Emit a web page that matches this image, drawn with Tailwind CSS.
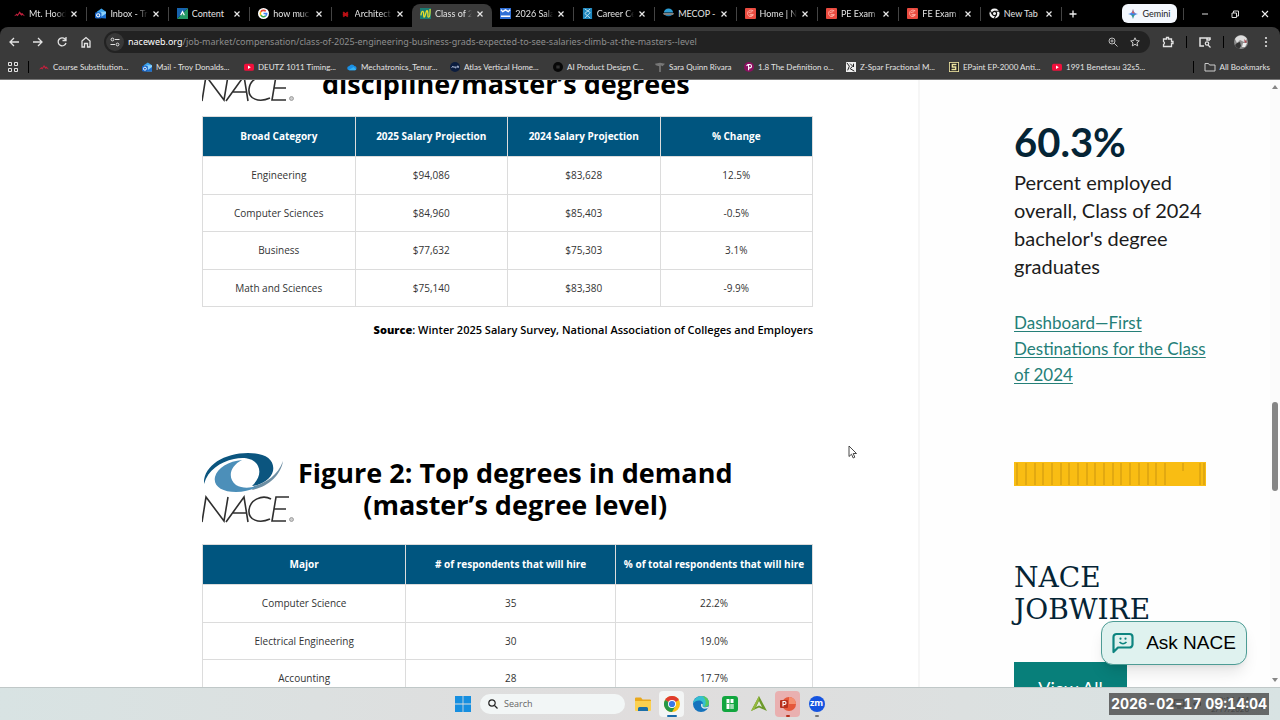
<!DOCTYPE html>
<html lang="en">
<head>
    <meta charset="UTF-8">
    <meta name="viewport" content="width=device-width, initial-scale=1.0">
    <title>Class of 2025 Salaries</title>
    <script src="https://cdn.jsdelivr.net/npm/@tailwindcss/browser@4"></script>
</head>
<body class="h-screen overflow-hidden flex flex-col bg-black font-['Open_Sans',sans-serif] text-black">
    <!-- Shared symbols -->
    <svg class="hidden">
        <symbol id="i-mhcc" viewBox="0 0 12 12"><path d="M0 9 L3 6 L4 7 L6 3.500 L8 6 L9 5.500 L12 9 L9 7.500 L8 8.500 L6 6 L4 9 L3 8Z" fill="#c3203d"/></symbol>
        <symbol id="i-outlook" viewBox="0 0 12 12"><path d="M2 4 L7 .5 L12 4 V11 H3Z" fill="#3ba3ee"/><path d="M5 4h7v7H6z" fill="#8cd0fb"/><path d="M5 11 L12 6 V11.500Z" fill="#1b6fd0"/><rect y="4.500" width="7" height="7" rx="1.500" fill="#1664c7"/><circle cx="3.500" cy="8" r="1.800" fill="none" stroke="#fff" stroke-width="1.100"/></symbol>
        <symbol id="i-content" viewBox="0 0 12 12"><path d="M0 0h12L0 12z" fill="#1763ae"/><path d="M12 0v12H0z" fill="#259a66"/><path d="M4 8 L6 4 L8 8" fill="none" stroke="#fff" stroke-width="1.300"/></symbol>
        <symbol id="i-google" viewBox="0 0 12 12"><circle cx="6" cy="6" r="6" fill="#fff"/><g fill="none" stroke-width="1.700"><path d="M8.500 3.600A3.500 3.500 0 0 0 3 4.300" stroke="#ea4335"/><path d="M3 4.300A3.500 3.500 0 0 0 3 7.800" stroke="#fbbc05"/><path d="M3 7.800A3.500 3.500 0 0 0 8.300 8.600" stroke="#34a853"/><path d="M8.300 8.600A3.500 3.500 0 0 0 9.500 6H6" stroke="#4285f4"/></g></symbol>
        <symbol id="i-arch" viewBox="0 0 12 12"><path d="M3.500 4.500l5 5M8.500 4.500l-5 5M3 7h6" stroke="#b90f14" stroke-width="1.800"/></symbol>
        <symbol id="i-nace" viewBox="0 0 12 12"><rect width="12" height="12" fill="#1b7b72"/><path d="M1 8c1-6 3-5 3-1s1 4 2 0 2-6 2.500-2-.5 5 1 5S11 6 11 1" fill="none" stroke="#e9df2c" stroke-width="1.400"/></symbol>
        <symbol id="i-sal" viewBox="0 0 12 12"><rect width="12" height="12" fill="#2f6fd6"/><path d="M1 2l2 2 3-2 3 2 2-2M1 9h10" stroke="#fff" stroke-width="1.500" fill="none"/></symbol>
        <symbol id="i-career" viewBox="0 0 12 12"><rect x="1" width="10" height="12" fill="#1e86bd"/><path d="M3 1l6 4-6 6M9 1l-6 5 6 5" stroke="#bfe6f6" fill="none"/></symbol>
        <symbol id="i-mecop" viewBox="0 0 12 12"><path d="M1 5a5 4.500 0 0 1 10 0z" fill="#2c9ed6"/><path d="M0 6h12l-1 1H1z" fill="#fff"/><path d="M2 7.500h8a5 4 0 0 1-8 0z" fill="#1b79ad"/></symbol>
        <symbol id="i-ncees" viewBox="0 0 12 12"><rect width="12" height="12" rx="1" fill="#ea4b40"/><path d="M9 3C5 1 2 4 3 7s5 3 6 0H5M4 5l4-1M5 9l4-1" stroke="#ffb3a8" fill="none"/></symbol>
        <symbol id="i-newtab" viewBox="0 0 12 12"><circle cx="6" cy="6" r="5.500" fill="#f4f4f4"/><circle cx="6" cy="6" r="2.300" fill="#f4f4f4" stroke="#111" stroke-width="1.300"/><path d="M6 3.500h5.500M3.900 7.300L1.200 2.800M8 7.300L5.300 12" stroke="#111" stroke-width="1.200"/></symbol>
        <symbol id="i-youtube" viewBox="0 0 12 12"><rect y="2" width="12" height="8.500" rx="2.200" fill="#f0103c"/><path d="M4.800 4.300v4l3.400-2z" fill="#fff"/></symbol>
        <symbol id="i-cloud" viewBox="0 0 12 12"><path d="M3 10a2.600 2.600 0 0 1-.3-5.200A3.600 3.600 0 0 1 9 4.700 2.700 2.700 0 0 1 9.500 10z" fill="#1a8fe3"/><path d="M2 9.500L8 6l3 3-1 1H3z" fill="#35b1f3"/></symbol>
        <symbol id="i-atlas" viewBox="0 0 12 12"><circle cx="6" cy="6" r="6" fill="#0c1d3e"/><path d="M2 7l1.500-2L5 7M6 5v2h1.500M8.500 7V5H10v2" stroke="#cfdcf5" fill="none"/></symbol>
        <symbol id="i-ai" viewBox="0 0 12 12"><circle cx="6" cy="6" r="6" fill="#080808"/><path d="M4 5h4M4 7h4" stroke="#555"/></symbol>
        <symbol id="i-sara" viewBox="0 0 12 12"><path d="M0 2l6-1 6 1-3 3-2-1v8H5V5L1 4z" fill="#777"/></symbol>
        <symbol id="i-pearson" viewBox="0 0 12 12"><circle cx="6" cy="6" r="6" fill="#8a1060"/><path d="M5.500 10V3H7a2 2 0 0 1 0 4H5.500M3 4.500l2-1.500" stroke="#fff" stroke-width="1.300" fill="none"/></symbol>
        <symbol id="i-zspar" viewBox="0 0 12 12"><rect width="12" height="12" fill="#eee"/><path d="M1 1l3 4-2 5M5 2l3 3-3 3 5 3M9 2v4" stroke="#222" stroke-width="1.200" fill="none"/></symbol>
        <symbol id="i-epaint" viewBox="0 0 12 12"><rect x=".5" y=".5" width="11" height="11" fill="#222" stroke="#ece3a0"/><path d="M9 3H4v3h4v3H3" stroke="#ece3a0" stroke-width="1.700" fill="none"/></symbol>
        <symbol id="i-close" viewBox="0 0 8 8"><path d="M1.500 1.500l5 5M6.500 1.500l-5 5" stroke="#e8e8e8" stroke-width="1.200"/></symbol>
        <symbol id="i-logotext" viewBox="0 0 92 28"><g fill="none" stroke="#2f2f2f" stroke-width="1.600"><path d="M0 27L4 2L22 26L26 2"/><path d="M24 27L42 2L46 27M30 18H45"/><path d="M69 4C60-1 48 5 47 15S57 29 68 24"/><path d="M87 2H74L70 26H84M72 14H84"/></g><circle cx="89.500" cy="24.500" r="2" fill="#ccc" stroke="#888" stroke-width=".7"/></symbol>
    </svg>

    <!-- Tab strip -->
    <header class="h-[27px] shrink-0 flex items-center text-[9px] text-[#e3e3e3] font-['Lato',sans-serif]">
        <nav class="flex-1 min-w-0 flex h-full items-center pl-1.5">
            <a href="#" class="flex-1 min-w-0 flex items-center h-3.5 px-2 border-r border-[#444]"><svg class="size-[11px] shrink-0"><use href="#i-mhcc"/></svg><span class="ml-1 flex-1 min-w-0 overflow-hidden whitespace-nowrap mask-r-from-70%">Mt. Hood</span><svg class="size-2 shrink-0 ml-1"><use href="#i-close"/></svg></a>
            <a href="#" class="flex-1 min-w-0 flex items-center h-3.5 px-2 border-r border-[#444]"><svg class="size-[11px] shrink-0"><use href="#i-outlook"/></svg><span class="ml-1 flex-1 min-w-0 overflow-hidden whitespace-nowrap mask-r-from-70%">Inbox - Tr</span><svg class="size-2 shrink-0 ml-1"><use href="#i-close"/></svg></a>
            <a href="#" class="flex-1 min-w-0 flex items-center h-3.5 px-2 border-r border-[#444]"><svg class="size-[11px] shrink-0"><use href="#i-content"/></svg><span class="ml-1 flex-1 min-w-0 overflow-hidden whitespace-nowrap">Content</span><svg class="size-2 shrink-0 ml-1"><use href="#i-close"/></svg></a>
            <a href="#" class="flex-1 min-w-0 flex items-center h-3.5 px-2 border-r border-[#444]"><svg class="size-[11px] shrink-0"><use href="#i-google"/></svg><span class="ml-1 flex-1 min-w-0 overflow-hidden whitespace-nowrap mask-r-from-70%">how muc</span><svg class="size-2 shrink-0 ml-1"><use href="#i-close"/></svg></a>
            <a href="#" class="flex-1 min-w-0 flex items-center h-3.5 px-2"><svg class="size-[11px] shrink-0"><use href="#i-arch"/></svg><span class="ml-1 flex-1 min-w-0 overflow-hidden whitespace-nowrap mask-r-from-70%">Architect</span><svg class="size-2 shrink-0 ml-1"><use href="#i-close"/></svg></a>
            <a href="#" class="flex-1 min-w-0 flex items-center self-end h-[23px] pb-1 px-2 rounded-t-lg bg-[#3a3a3a]"><svg class="size-[11px] shrink-0"><use href="#i-nace"/></svg><span class="ml-1 flex-1 min-w-0 overflow-hidden whitespace-nowrap mask-r-from-80%">Class of 2</span><svg class="size-2 shrink-0 ml-1"><use href="#i-close"/></svg></a>
            <a href="#" class="flex-1 min-w-0 flex items-center h-3.5 px-2 border-r border-[#444]"><svg class="size-[11px] shrink-0"><use href="#i-sal"/></svg><span class="ml-1 flex-1 min-w-0 overflow-hidden whitespace-nowrap mask-r-from-80%">2026 Sala</span><svg class="size-2 shrink-0 ml-1"><use href="#i-close"/></svg></a>
            <a href="#" class="flex-1 min-w-0 flex items-center h-3.5 px-2 border-r border-[#444]"><svg class="size-[11px] shrink-0"><use href="#i-career"/></svg><span class="ml-1 flex-1 min-w-0 overflow-hidden whitespace-nowrap mask-r-from-80%">Career Ce</span><svg class="size-2 shrink-0 ml-1"><use href="#i-close"/></svg></a>
            <a href="#" class="flex-1 min-w-0 flex items-center h-3.5 px-2 border-r border-[#444]"><svg class="size-[11px] shrink-0"><use href="#i-mecop"/></svg><span class="ml-1 flex-1 min-w-0 overflow-hidden whitespace-nowrap">MECOP -</span><svg class="size-2 shrink-0 ml-1"><use href="#i-close"/></svg></a>
            <a href="#" class="flex-1 min-w-0 flex items-center h-3.5 px-2 border-r border-[#444]"><svg class="size-[11px] shrink-0"><use href="#i-ncees"/></svg><span class="ml-1 flex-1 min-w-0 overflow-hidden whitespace-nowrap mask-r-from-80%">Home | N</span><svg class="size-2 shrink-0 ml-1"><use href="#i-close"/></svg></a>
            <a href="#" class="flex-1 min-w-0 flex items-center h-3.5 px-2 border-r border-[#444]"><svg class="size-[11px] shrink-0"><use href="#i-ncees"/></svg><span class="ml-1 flex-1 min-w-0 overflow-hidden whitespace-nowrap mask-r-from-80%">PE Exam |</span><svg class="size-2 shrink-0 ml-1"><use href="#i-close"/></svg></a>
            <a href="#" class="flex-1 min-w-0 flex items-center h-3.5 px-2 border-r border-[#444]"><svg class="size-[11px] shrink-0"><use href="#i-ncees"/></svg><span class="ml-1 flex-1 min-w-0 overflow-hidden whitespace-nowrap mask-r-from-80%">FE Exam |</span><svg class="size-2 shrink-0 ml-1"><use href="#i-close"/></svg></a>
            <a href="#" class="flex-1 min-w-0 flex items-center h-3.5 px-2 border-r border-[#444]"><svg class="size-[11px] shrink-0"><use href="#i-newtab"/></svg><span class="ml-1 flex-1 min-w-0 overflow-hidden whitespace-nowrap">New Tab</span><svg class="size-2 shrink-0 ml-1"><use href="#i-close"/></svg></a>
        </nav>
        <div class="w-[218px] shrink-0 flex items-center">
            <button aria-label="New tab" class="ml-1.5"><svg class="size-2.5" viewBox="0 0 10 10"><path d="M5 1.500v7M1.500 5h7" stroke="#eee" stroke-width="1.300"/></svg></button>
            <button class="ml-11 h-[19px] w-[55px] rounded-md bg-[#f3f7fd] text-[#222] flex items-center justify-center gap-1"><svg class="size-2.5" viewBox="0 0 10 10"><path d="M5 0Q5.500 4.500 10 5H0Q4.500 4.500 5 0Z" fill="#4d7fe6"/><path d="M10 5Q5.500 5.500 5 10Q4.500 5.500 0 5Z" fill="#3b86d8"/><path d="M5 0Q5.300 3.500 7 4.500L4 4Q4.800 2 5 0Z" fill="#e0604f"/><path d="M5 10Q4.800 7.500 4 6l2 0Q5.300 7.500 5 10Z" fill="#3aa865"/></svg>Gemini</button>
            <span class="ml-1.5 h-3 w-px bg-[#444]"></span>
            <button aria-label="Minimize" class="ml-4"><svg class="size-2.5" viewBox="0 0 10 10"><path d="M2 5h6" stroke="#ddd"/></svg></button>
            <button aria-label="Restore" class="ml-5"><svg class="size-2.5" viewBox="0 0 10 10"><path d="M2 4h4.500v4.500H2zM3.500 4V2H8.500v5H6.500" fill="none" stroke="#ddd"/></svg></button>
            <button aria-label="Close" class="ml-5"><svg class="size-2.5" viewBox="0 0 10 10"><path d="M2 2l6 6M8 2l-6 6" stroke="#eee" stroke-width="1.100"/></svg></button>
        </div>
    </header>

    <!-- Toolbar and bookmarks -->
    <div class="h-[53px] shrink-0 bg-[#3a3a3a] rounded-t-lg border-b border-[#777] text-[#e3e3e3] font-['Lato',sans-serif]">
        <div class="h-[30px] flex items-center pl-2">
            <button aria-label="Back" class="mr-3"><svg class="size-3" viewBox="0 0 12 12"><path d="M11 6H2M6 2L2 6l4 4" fill="none" stroke="#e3e3e3" stroke-width="1.300"/></svg></button>
            <button aria-label="Forward" class="mr-3"><svg class="size-3" viewBox="0 0 12 12"><path d="M1 6h9M6 2l4 4-4 4" fill="none" stroke="#e3e3e3" stroke-width="1.300"/></svg></button>
            <button aria-label="Reload" class="mr-3"><svg class="size-3" viewBox="0 0 12 12"><path d="M10 7A4 4 0 1 1 9 3L10 4M10 1v3.500H6.500" fill="none" stroke="#e3e3e3" stroke-width="1.300"/></svg></button>
            <button aria-label="Home" class="mr-3"><svg class="size-3" viewBox="0 0 12 12"><path d="M2 5l4-3.500L10 5v6H7.500V7.500h-3V11H2z" fill="none" stroke="#e3e3e3" stroke-width="1.300"/></svg></button>
            <div class="flex-1 h-[22px] rounded-full bg-[#222] flex items-center pl-0.5 pr-2.5 mr-3">
                <span class="size-[18px] rounded-full bg-[#383838] flex items-center justify-center"><svg class="size-2.5" viewBox="0 0 10 10"><path d="M5 2.500h4.500M.5 7.500H5" stroke="#e3e3e3"/><circle cx="2.500" cy="2.500" r="1.400" fill="none" stroke="#e3e3e3"/><circle cx="7.500" cy="7.500" r="1.400" fill="none" stroke="#e3e3e3"/></svg></span>
                <span class="flex-1 ml-1 whitespace-nowrap text-[9px] font-['Noto_Sans',sans-serif] text-[#8d8d8d]"><span class="text-white">naceweb.org</span>/job-market/compensation/class-of-2025-engineering-business-grads-expected-to-see-salaries-climb-at-the-masters--level</span>
                <button aria-label="Zoom" class="mr-3"><svg class="size-2.5" viewBox="0 0 10 10"><circle cx="4" cy="4" r="3" fill="none" stroke="#bbb"/><path d="M6.200 6.200L9.500 9.500M2.500 4h3M4 2.500v3" stroke="#bbb"/></svg></button>
                <button aria-label="Bookmark"><svg class="size-2.5" viewBox="0 0 10 10"><path d="M5 .8l1.300 2.800 3 .3-2.300 2 .7 3L5 7.300 2.300 8.900l.7-3-2.300-2 3-.3z" fill="none" stroke="#ccc"/></svg></button>
            </div>
            <button aria-label="Extensions"><svg class="size-3" viewBox="0 0 12 12"><path d="M1.500 3H4.500V1.500h2V3H9.500V5.500H11v2H9.500V10.500H1.500V8.500q2-1.500 0-3z" fill="none" stroke="#e3e3e3" stroke-width="1.300"/></svg></button>
            <span class="ml-3 h-3 w-px bg-black"></span>
            <button aria-label="Tab search" class="ml-3"><svg class="size-3" viewBox="0 0 12 12"><path d="M5 10H1V2h10v2M8 2v2h3" fill="none" stroke="#e3e3e3" stroke-width="1.500"/><circle cx="8" cy="7.500" r="1.700" fill="none" stroke="#e3e3e3" stroke-width="1.200"/><path d="M9 9l2.500 2.500" stroke="#e3e3e3" stroke-width="1.200"/></svg></button>
            <span class="ml-3 h-3 w-px bg-black"></span>
            <button aria-label="Profile" class="ml-2.5"><svg class="size-3.5" viewBox="0 0 14 14"><circle cx="7" cy="7" r="7" fill="#8d8d8d"/><path d="M1 4a7 7 0 0 1 12 0l-3 3-4-2-3 3z" fill="#ddd"/><path d="M3 8l3-1 1 4-2 3A7 7 0 0 1 1 10z" fill="#333"/><path d="M9 8h4l-2 4H8z" fill="#eee"/><path d="M10 4l3 3-2 1z" fill="#b14a52"/></svg></button>
            <button aria-label="Menu" class="ml-3 mr-2"><svg class="size-3" viewBox="0 0 12 12" fill="#e3e3e3"><circle cx="6" cy="2" r="1.100"/><circle cx="6" cy="6" r="1.100"/><circle cx="6" cy="10" r="1.100"/></svg></button>
        </div>
        <nav class="h-[19px] flex items-center pl-2 whitespace-nowrap text-[8px]">
            <svg class="size-2.5 mr-2.5" viewBox="0 0 10 10"><path d="M.5.5h3v3h-3zM6.500.5h3v3h-3zM.5 6.500h3v3h-3zM6.500 6.500h3v3h-3z" fill="none" stroke="#e3e3e3"/></svg>
            <span class="h-3 w-px bg-black mr-2.5"></span>
            <a href="#" class="w-[103px] flex items-center gap-1"><svg class="size-2.5 shrink-0"><use href="#i-mhcc"/></svg>Course Substitution...</a>
            <a href="#" class="w-[102px] flex items-center gap-1"><svg class="size-2.5 shrink-0"><use href="#i-outlook"/></svg>Mail - Troy Donalds...</a>
            <a href="#" class="w-[103px] flex items-center gap-1"><svg class="size-2.5 shrink-0"><use href="#i-youtube"/></svg>DEUTZ 1011 Timing...</a>
            <a href="#" class="w-[103px] flex items-center gap-1"><svg class="size-2.5 shrink-0"><use href="#i-cloud"/></svg>Mechatronics_Tenur...</a>
            <a href="#" class="w-[103px] flex items-center gap-1"><svg class="size-2.5 shrink-0"><use href="#i-atlas"/></svg>Atlas Vertical Home...</a>
            <a href="#" class="w-[102px] flex items-center gap-1"><svg class="size-2.5 shrink-0"><use href="#i-ai"/></svg>AI Product Design C...</a>
            <a href="#" class="w-[89px] flex items-center gap-1"><svg class="size-2.5 shrink-0"><use href="#i-sara"/></svg>Sara Quinn Rivara</a>
            <a href="#" class="w-[102px] flex items-center gap-1"><svg class="size-2.5 shrink-0"><use href="#i-pearson"/></svg>1.8 The Definition o...</a>
            <a href="#" class="w-[103px] flex items-center gap-1"><svg class="size-2.5 shrink-0"><use href="#i-zspar"/></svg>Z-Spar Fractional M...</a>
            <a href="#" class="w-[103px] flex items-center gap-1"><svg class="size-2.5 shrink-0"><use href="#i-epaint"/></svg>EPaint EP-2000 Anti...</a>
            <a href="#" class="flex items-center gap-1"><svg class="size-2.5 shrink-0"><use href="#i-youtube"/></svg>1991 Beneteau 32s5...</a>
            <span class="ml-auto h-3 w-px bg-black"></span>
            <a href="#" class="ml-2.5 mr-2.5 flex items-center gap-1"><svg class="size-3" viewBox="0 0 12 12"><path d="M1 2.500h3.500l1 1.500H11v6H1z" fill="none" stroke="#ccc"/></svg>All Bookmarks</a>
        </nav>
    </div>

    <!-- Page -->
    <div class="relative flex-1 min-h-0 overflow-hidden flex bg-white">
        <main class="flex-1 min-w-0 pl-[202px] pr-[105px] border-r-2 border-[#f6f6f6]">
            <div class="h-9 overflow-hidden flex items-end">
                <svg class="w-[92px] h-7 shrink-0 mb-3.5"><use href="#i-logotext"/></svg>
                <h2 class="ml-7 mb-4 text-[27px] leading-8 font-bold whitespace-nowrap">discipline/master’s degrees</h2>
            </div>
            <table class="w-full table-fixed border-collapse text-center text-[10px] text-[#333]">
                <thead>
                    <tr class="h-10 bg-[#00557f] text-white">
                        <th class="border border-[#dcdcdc]">Broad Category</th><th class="border border-[#dcdcdc]">2025 Salary Projection</th><th class="border border-[#dcdcdc]">2024 Salary Projection</th><th class="border border-[#dcdcdc]">% Change</th>
                    </tr>
                </thead>
                <tbody>
                    <tr class="h-[38px]"><td class="border border-[#dcdcdc]">Engineering</td><td class="border border-[#dcdcdc]">$94,086</td><td class="border border-[#dcdcdc]">$83,628</td><td class="border border-[#dcdcdc]">12.5%</td></tr>
                    <tr class="h-[37px]"><td class="border border-[#dcdcdc]">Computer Sciences</td><td class="border border-[#dcdcdc]">$84,960</td><td class="border border-[#dcdcdc]">$85,403</td><td class="border border-[#dcdcdc]">-0.5%</td></tr>
                    <tr class="h-[38px]"><td class="border border-[#dcdcdc]">Business</td><td class="border border-[#dcdcdc]">$77,632</td><td class="border border-[#dcdcdc]">$75,303</td><td class="border border-[#dcdcdc]">3.1%</td></tr>
                    <tr class="h-[37px]"><td class="border border-[#dcdcdc]">Math and Sciences</td><td class="border border-[#dcdcdc]">$75,140</td><td class="border border-[#dcdcdc]">$83,380</td><td class="border border-[#dcdcdc]">-9.9%</td></tr>
                </tbody>
            </table>
            <p class="mt-3.5 text-right text-[11px] leading-[18px] font-semibold whitespace-nowrap"><b class="font-extrabold">Source</b>: Winter 2025 Salary Survey, National Association of Colleges and Employers</p>
            <div class="mt-28 flex">
                <div class="w-[92px] shrink-0">
                    <!-- Swirl mark over the wordmark -->
                    <svg class="w-[92px] h-11" viewBox="0 0 92 44">
                        <path d="M2 33C1 15 22 2 46 2C64 2 73 9 71 20C69 28 60 34 50 35C57 28 59 21 56 15C52 7 42 6 32 8C18 11 6 19 2 33Z" fill="#0b557f"/>
                        <path d="M52 35C64 32 76 24 81 10C79 24 66 36 50 39Z" fill="#6d8ea3"/>
                        <path d="M40 9C28 15 25 27 34 34C41 38 50 37 58 34C50 39 43 41 34 41C20 41 11 35 13 26C15 17 27 10 40 9Z" fill="#4c8fb9"/>
                    </svg>
                    <svg class="w-[92px] h-7"><use href="#i-logotext"/></svg>
                </div>
                <h2 class="ml-1 mt-1.5 text-[27px] leading-8 font-bold text-center whitespace-nowrap">Figure 2: Top degrees in demand<br>(master’s degree level)</h2>
            </div>
            <table class="mt-[21px] w-full table-fixed border-collapse text-center text-[10px] text-[#333]">
                <thead>
                    <tr class="h-10 bg-[#00557f] text-white">
                        <th class="w-1/3 border border-[#dcdcdc]">Major</th><th class="border border-[#dcdcdc]"># of respondents that will hire</th><th class="w-[197px] border border-[#dcdcdc] whitespace-nowrap">% of total respondents that will hire</th>
                    </tr>
                </thead>
                <tbody>
                    <tr class="h-[38px]"><td class="border border-[#dcdcdc]">Computer Science</td><td class="border border-[#dcdcdc]">35</td><td class="border border-[#dcdcdc]">22.2%</td></tr>
                    <tr class="h-[37px]"><td class="border border-[#dcdcdc]">Electrical Engineering</td><td class="border border-[#dcdcdc]">30</td><td class="border border-[#dcdcdc]">19.0%</td></tr>
                    <tr class="h-[38px]"><td class="border border-[#dcdcdc]">Accounting</td><td class="border border-[#dcdcdc]">28</td><td class="border border-[#dcdcdc]">17.7%</td></tr>
                </tbody>
            </table>
        </main>
        <aside class="w-[350px] shrink-0 pl-[94px] pr-16 pt-9 font-['Lato',sans-serif] bg-[#fefefe]">
            <p class="text-[40px] leading-[52px] font-bold text-[#052435]">60.3%</p>
            <p class="text-xl leading-7 text-[#1c1c1c]">Percent employed overall, Class of 2024 bachelor's degree graduates</p>
            <p class="mt-[30px] text-[17px] leading-[26px] whitespace-nowrap"><a href="#" class="text-[#257f78] underline underline-offset-2">Dashboard—First<br>Destinations for the Class<br>of 2024</a></p>
            <svg class="mt-[74px] w-full h-6" viewBox="0 0 192 24" preserveAspectRatio="none"><rect width="192" height="24" fill="#f9bd13"/><path d="M3 1v22M12 1v22M21 1v22M29 1v22M38 1v22M47 1v22M55 1v22M64 1v22M73 1v22M81 1v22M90 1v22M99 1v22M107 1v22M116 1v22M125 1v22M134 1v22M142 1v22M151 1v22M169 1v8M186 1v22M190 1v22" stroke="#d39c12" stroke-width="1.200"/></svg>
            <h2 class="mt-[76px] font-['DejaVu_Serif',serif] text-[28px] leading-8 text-[#052435]">NACE<br>JOBWIRE</h2>
            <a href="#" class="mt-9 block w-[113px] h-[50px] pt-3 bg-[#087f7a] text-white text-center text-lg">View All</a>
        </aside>
        <div class="w-2.5 shrink-0 flex flex-col items-center py-1 bg-[#fbfbfb]">
            <svg class="w-1.5 h-1.5" viewBox="0 0 6 6"><path d="M0 5l3-4 3 4z" fill="#858585"/></svg>
            <div class="mt-[312px] w-1.5 h-[89px] rounded-full bg-[#858585]"></div>
            <svg class="mt-auto w-1.5 h-1.5" viewBox="0 0 6 6"><path d="M0 1l3 4 3-4z" fill="#858585"/></svg>
        </div>

        <!-- Chat launcher -->
        <button class="absolute right-[33px] bottom-[22px] w-[146px] h-11 rounded-xl border border-[#4d9c95] bg-[#dff2ef] shadow-lg flex items-center justify-center gap-3 font-['Liberation_Sans',sans-serif] text-[19px] whitespace-nowrap">
            <svg class="size-[22px] shrink-0" viewBox="0 0 22 22"><path d="M1.500 20V5a3 3 0 0 1 3-3h13a3 3 0 0 1 3 3v7.500a3 3 0 0 1-3 3H6z" fill="none" stroke="#0e8580" stroke-width="2.200" stroke-linejoin="round"/><path d="M7.500 10q3.500 3.500 7 0" fill="none" stroke="#0e8580" stroke-width="1.600"/><circle cx="8.500" cy="6.700" r="1.100" fill="#0e8580"/><circle cx="13.500" cy="6.700" r="1.100" fill="#0e8580"/></svg>
            Ask NACE
        </button>
        <!-- Mouse pointer -->
        <svg class="absolute left-[848px] top-[365px] w-2.5 h-3.5" viewBox="0 0 10 14"><path d="M1 1v10.500L3.500 9.200 5.200 13l1.600-.8L5.200 8.500H8.500z" fill="#fff" stroke="#333" stroke-width=".9"/></svg>
    </div>

    <!-- Taskbar -->
    <footer class="relative h-[33px] shrink-0 flex items-center justify-center bg-linear-to-r from-[#d8e3e3] via-[#e0dddd] to-[#d8e3e3] border-t border-[#c0c8c8]">
        <div class="ml-1 flex items-center gap-[9px]">
            <button aria-label="Start"><svg class="size-4" viewBox="0 0 16 16"><path d="M0 0h7.600v7.600H0zM8.400 0H16v7.600H8.400zM0 8.400h7.600V16H0zM8.400 8.400H16V16H8.400z" fill="#168fe0"/></svg></button>
            <label class="w-[145px] h-5 rounded-full bg-[#f2f6f6] flex items-center pl-2 gap-1.5"><svg class="size-2.5" viewBox="0 0 10 10"><circle cx="4" cy="4" r="3.200" fill="none" stroke="#222" stroke-width="1.200"/><path d="M6.500 6.500L9.500 9.500" stroke="#222" stroke-width="1.200"/></svg><input type="text" placeholder="Search" class="w-24 text-[9px] placeholder:text-[#666]"></label>
            <div class="-ml-1 flex items-center gap-1">
                <button aria-label="File Explorer" class="w-[25px] h-[26px] flex items-center justify-center"><svg class="size-4" viewBox="0 0 16 16"><path d="M0 2.500a1 1 0 0 1 1-1h5l1.500 2H15a1 1 0 0 1 1 1V13H0z" fill="#e9a81c"/><path d="M0 5h16v9a1 1 0 0 1-1 1H1a1 1 0 0 1-1-1z" fill="#fbd04f"/><path d="M3 15v-2.500a1.500 1.500 0 0 1 1.500-1.500h7a1.500 1.500 0 0 1 1.500 1.500V15z" fill="#1c6fa8"/></svg></button>
                <button aria-label="Chrome" class="relative w-[25px] h-[26px] rounded bg-[#f3f5f5] flex items-center justify-center"><svg class="size-4" viewBox="0 0 16 16"><circle cx="8" cy="8" r="8" fill="#fbc116"/><path d="M8 8L1.070 4A8 8 0 0 1 14.930 4z" fill="#df3b2f"/><path d="M8 8L1.070 4A8 8 0 0 0 8 16l3.500-6z" fill="#279847"/><circle cx="8" cy="8" r="4" fill="#fff"/><circle cx="8" cy="8" r="3.100" fill="#3b78e7"/></svg><span class="absolute bottom-0 w-2.5 h-0.5 rounded-full bg-[#1769aa]"></span></button>
                <button aria-label="Edge" class="w-[25px] h-[26px] flex items-center justify-center"><svg class="size-4" viewBox="0 0 16 16"><circle cx="8" cy="8" r="8" fill="#1573bd"/><path d="M0 7.500C1 2 5 0 8.500 0 13 0 16 3.500 16 7c0 3-2.500 4-5 4-1.500 0-2-.8-1.500-1.500C11 7 9 4.500 6 4.500 3 4.500 1 6 0 7.500z" fill="#35bfd0"/><path d="M9 0c4 .2 7 3 7 7 0 3-2.500 4-5 4 3-3 2-9-2-11z" fill="#58c95f"/><path d="M8 8.500c-.5 3.500 3 5.500 7 3.500l.6-1.500c-2 1-4.600.9-5.600.2-.8-.5-.5-1.200-.2-1.700C9.700 7.500 8.200 7.500 8 8.500z" fill="#dfeaea"/></svg></button>
                <button aria-label="Sheets" class="w-[25px] h-[26px] flex items-center justify-center"><svg class="size-4" viewBox="0 0 16 16"><rect width="16" height="16" rx="3" fill="#12a63f"/><path d="M4.500 3h3v10h-3zM8.500 3h3v4h-3zM8.500 8h3v5h-3z" fill="#fff"/><path d="M4.500 7.500h3M10 8v5" stroke="#12a63f" stroke-width=".8"/></svg></button>
                <button aria-label="Design app" class="w-[25px] h-[26px] flex items-center justify-center"><svg class="size-4" viewBox="0 0 16 16"><path d="M8 0l8 15-8-3.500L0 15z" fill="#6d9a2b"/><path d="M8 5l3 6-3-1.500L5 11z" fill="#e4eadb"/><path d="M8 0L0 15l3.500-1.500L8 4z" fill="#95b83d"/></svg></button>
                <button aria-label="PowerPoint" class="relative w-[25px] h-[26px] rounded bg-[#e9b0b0] flex items-center justify-center"><svg class="size-4" viewBox="0 0 16 16"><circle cx="9" cy="8" r="7" fill="#e5573a"/><path d="M9 1a7 7 0 0 1 7 7H9z" fill="#f58f70"/><rect y="4" width="8" height="8" rx="1" fill="#b7301c"/><path d="M3 10.500v-5h1.500a1.500 1.500 0 0 1 0 3H3" fill="none" stroke="#fff" stroke-width="1.100"/></svg><span class="absolute bottom-0 w-1 h-0.5 rounded-full bg-[#b7301c]"></span></button>
                <button aria-label="Zoom" class="relative w-[25px] h-[26px] flex items-center justify-center"><span class="size-4 rounded-full bg-[#1554e0] text-white text-[9px] leading-[14px] font-bold text-center">zm</span><span class="absolute bottom-0 w-1 h-0.5 rounded-full bg-[#777]"></span></button>
            </div>
        </div>
        <!-- System tray under the timestamp -->
        <div class="absolute right-[11px] top-[5px] w-40 h-[22px]">
            <div class="h-full flex items-center gap-2 pl-1 pr-0.5 text-[#222]">
                <svg class="size-2 mr-auto" viewBox="0 0 8 8"><path d="M1 5.500l3-3 3 3" fill="none" stroke="#222"/></svg>
                <svg class="size-3" viewBox="0 0 12 12"><path d="M1 2h10v6H1zM4 10h4" fill="none" stroke="#222"/></svg>
                <svg class="size-2.5" viewBox="0 0 10 10"><path d="M1 4h2l2-2v6L3 6H1zM7 3q1.500 2 0 4" fill="none" stroke="#222"/></svg>
                <span class="text-right text-[8px] leading-[10px]">9:14 AM<br>2/17/2026</span>
                <svg class="size-2.5" viewBox="0 0 10 10"><path d="M5 1a3 3 0 0 1 3 3v3H2V4a3 3 0 0 1 3-3zM4 9h2" fill="none" stroke="#222"/></svg>
            </div>
            <time class="absolute inset-0 bg-[#484848]/80 text-white text-center text-sm leading-[22px] font-bold whitespace-nowrap font-['Inter',sans-serif] tabular-nums">2026-02-17 09:14:04</time>
        </div>
    </footer>
</body>
</html>
